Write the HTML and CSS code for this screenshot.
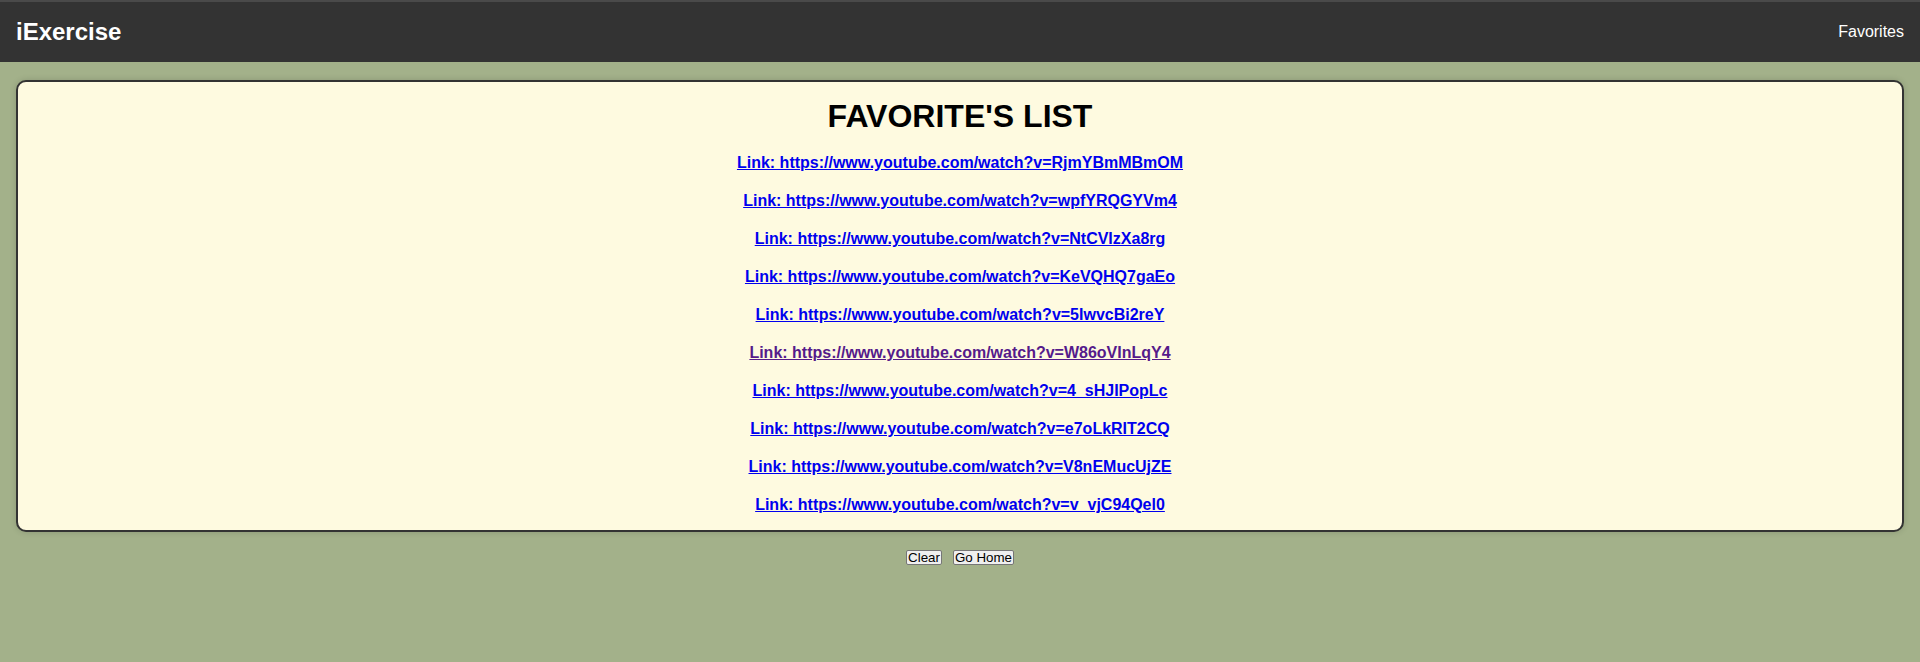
FILE: index.html
```html
<!DOCTYPE html>
<html lang="en">
<head>
<meta charset="utf-8">
<title>iExercise - Favorites</title>
<link rel="stylesheet" href="styles.css">
</head>
<body>
<header class="topbar">
  <a class="brand" href="#">iExercise</a>
  <a class="nav-link" href="#">Favorites</a>
</header>
<main class="page">
  <section class="card">
    <h1 class="title">FAVORITE'S LIST</h1>
    <div class="links">
      <a class="fav" href="#">Link: https://www.youtube.com/watch?v=RjmYBmMBmOM</a>
      <a class="fav" href="#">Link: https://www.youtube.com/watch?v=wpfYRQGYVm4</a>
      <a class="fav" href="#">Link: https://www.youtube.com/watch?v=NtCVIzXa8rg</a>
      <a class="fav" href="#">Link: https://www.youtube.com/watch?v=KeVQHQ7gaEo</a>
      <a class="fav" href="#">Link: https://www.youtube.com/watch?v=5IwvcBi2reY</a>
      <a class="fav visited" href="#">Link: https://www.youtube.com/watch?v=W86oVInLqY4</a>
      <a class="fav" href="#">Link: https://www.youtube.com/watch?v=4_sHJIPopLc</a>
      <a class="fav" href="#">Link: https://www.youtube.com/watch?v=e7oLkRIT2CQ</a>
      <a class="fav" href="#">Link: https://www.youtube.com/watch?v=V8nEMucUjZE</a>
      <a class="fav" href="#">Link: https://www.youtube.com/watch?v=v_vjC94Qel0</a>
    </div>
  </section>
  <div class="actions">
    <button class="btn" type="button">Clear</button>
    <button class="btn" type="button">Go Home</button>
  </div>
</main>
</body>
</html>
```

FILE: styles.css
```css
html, body {
  margin: 0;
  padding: 0;
}
body {
  background: #a3b18a;
  font-family: "Liberation Sans", Arial, sans-serif;
  min-height: 662px;
}
.topbar {
  height: 60px;
  border-top: 2px solid #4a4a4a;
  background: #333333;
  display: flex;
  align-items: center;
  justify-content: space-between;
  padding: 0 16px;
}
.brand {
  color: #ffffff;
  font-size: 24px;
  font-weight: bold;
  text-decoration: none;
}
.nav-link {
  color: #ffffff;
  font-size: 16px;
  text-decoration: none;
}
.page {
  padding: 18px 16px 0;
}
.card {
  background: #fefae0;
  border: 2px solid #333333;
  border-radius: 10px;
  box-shadow: 0 0 6px rgba(0, 0, 0, 0.15);
  padding: 16px 0 16px;
  text-align: center;
}
.title {
  margin: 0 0 19px;
  font-size: 32px;
  font-weight: bold;
  color: #000000;
  line-height: 37px;
}
.links {
  display: flex;
  flex-direction: column;
  align-items: center;
  gap: 20px;
}
.fav {
  font-size: 16px;
  font-weight: bold;
  line-height: 18px;
  color: #0000ee;
  text-decoration: underline;
}
.fav.visited {
  color: #551a8b;
}
.actions {
  display: flex;
  justify-content: center;
  gap: 11px;
  padding-top: 18px;
}
.btn {
  font-family: "Liberation Sans", Arial, sans-serif;
  font-size: 13.33px;
  line-height: 13px;
  padding: 0 1px;
  background: #efefef;
  color: #000000;
  border: 1px solid #767676;
  border-radius: 2px;
}
```
